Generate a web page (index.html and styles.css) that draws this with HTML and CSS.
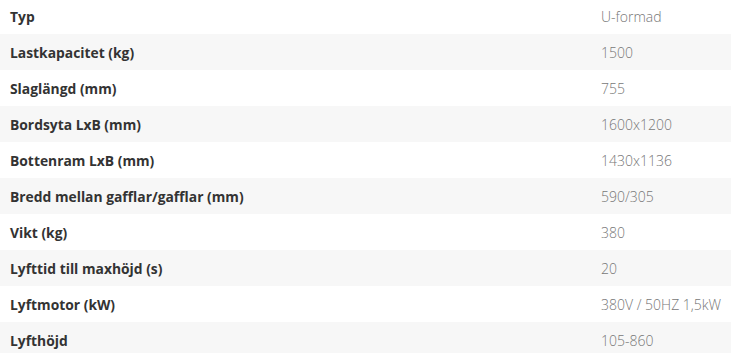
FILE: index.html
```html
<!DOCTYPE html>
<html lang="sv">
<head>
<meta charset="utf-8">
<link rel="stylesheet" href="styles.css">
</head>
<body>
<table class="specs">
<tbody>
<tr><th>Typ</th><td>U-formad</td></tr>
<tr><th>Lastkapacitet (kg)</th><td>1500</td></tr>
<tr><th>Slaglängd (mm)</th><td>755</td></tr>
<tr><th>Bordsyta LxB (mm)</th><td>1600x1200</td></tr>
<tr><th>Bottenram LxB (mm)</th><td>1430x1136</td></tr>
<tr><th>Bredd mellan gafflar/gafflar (mm)</th><td>590/305</td></tr>
<tr><th>Vikt (kg)</th><td>380</td></tr>
<tr><th>Lyfttid till maxhöjd (s)</th><td>20</td></tr>
<tr><th>Lyftmotor (kW)</th><td>380V / 50HZ 1,5kW</td></tr>
<tr><th>Lyfthöjd</th><td>105-860</td></tr>
</tbody>
</table>
</body>
</html>
```
FILE: styles.css
```css
html, body {
  margin: 0;
  padding: 0;
  background: #fff;
  overflow: hidden;
}
.specs {
  width: 731px;
  table-layout: fixed;
  border-collapse: collapse;
  margin-top: -2px;
  font-family: "Open Sans", "Liberation Sans", sans-serif;
  font-size: 14px;
}
.specs tr {
  height: 36px;
}
.specs tr:nth-child(even) {
  background: #f7f7f7;
}
.specs th {
  text-align: left;
  font-weight: 700;
  font-size: 13.85px;
  color: #333;
  padding: 0 10px;
  width: 571px;
  white-space: nowrap;
}
.specs td {
  font-weight: 300;
  color: #777;
  padding: 0 0 0 10px;
  white-space: nowrap;
}
```
